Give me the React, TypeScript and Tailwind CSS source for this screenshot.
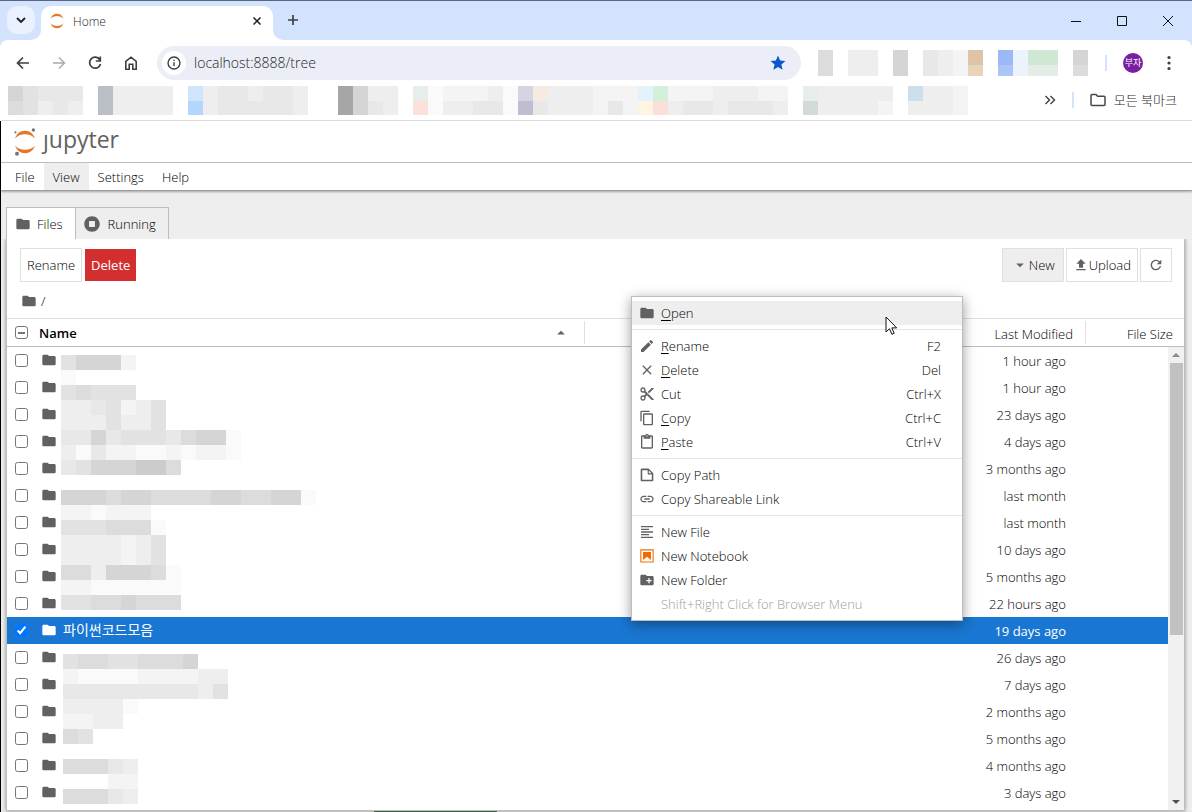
import type { ReactNode } from 'react'
import {
  MdClose,
  MdContentCopy,
  MdContentCut,
  MdContentPaste,
  MdCreateNewFolder,
  MdEdit,
  MdFileUpload,
  MdFolder,
  MdLink,
  MdRefresh,
  MdStar,
} from 'react-icons/md'

const TONES: Record<string, string> = {
  '.': 'bg-transparent',
  '1': 'bg-[#fafafa]',
  '2': 'bg-[#f4f4f4]',
  '3': 'bg-[#eeeeee]',
  '4': 'bg-[#e8e8e8]',
  '5': 'bg-[#e2e2e2]',
  '6': 'bg-[#dcdcdc]',
  '7': 'bg-[#d5d5d5]',
  '8': 'bg-[#cccccc]',
  '9': 'bg-[#a6a6a6]',
  a: 'bg-[#b9bfc4]',
  b: 'bg-[#cfe4fd]',
  c: 'bg-[#b3d6fd]',
  d: 'bg-[#fbe0db]',
  e: 'bg-[#d4d5e0]',
  f: 'bg-[#bfbdd0]',
  g: 'bg-[#f5ebe1]',
  h: 'bg-[#e3f2fc]',
  i: 'bg-[#d3f0da]',
  j: 'bg-[#fef4e2]',
  k: 'bg-[#fddfd9]',
  l: 'bg-[#cddfea]',
  m: 'bg-[#dfc3a7]',
  n: 'bg-[#e8d3bb]',
  o: 'bg-[#9cb8f7]',
  p: 'bg-[#abc5f8]',
  q: 'bg-[#edf3fc]',
  r: 'bg-[#cfe8d3]',
  s: 'bg-[#e4ece6]',
  t: 'bg-[#e6eeeb]',
  u: 'bg-[#d3dada]',
}

const EXTENSION_TILES = ['6.33.7.432m.oqrr.7', '6.33.7.432n.pqss.6']

const BOOKMARK_TILES = [
  '75444.a3333.b3443443..9733.t122231eg333222hi22233322.t33333.l332',
  '65343.a3333.c3444443..9743.d133441f4333242jk34434443.u33332.3332',
]

const UPPER_TILES = [
  '57772',
  '1',
  '56555',
  '3345235',
  '3335335',
  '447455546771',
  '314221121221',
  '45777886',
  '',
  '77767766667766771',
  '221222',
  '5556661',
  '3333235',
  '3333235',
  '66377761',
  '22111111',
  '55667666',
]

const LOWER_TILES = [
  '566556667',
  '21111222233',
  '44444444435',
  '33331',
  '2233',
  '65',
  '',
  '66643',
  '...22',
  '66643',
]

const MODIFIED = [
  '1 hour ago',
  '1 hour ago',
  '23 days ago',
  '4 days ago',
  '3 months ago',
  'last month',
  'last month',
  '10 days ago',
  '5 months ago',
  '22 hours ago',
  '19 days ago',
  '26 days ago',
  '7 days ago',
  '2 months ago',
  '5 months ago',
  '4 months ago',
  '3 days ago',
]

const SELECTED = 10

function Tiles({ rows, className = '' }: { rows: string[]; className?: string }) {
  return (
    <div className={`overflow-hidden ${className}`} aria-hidden="true">
      {rows.map((row, y) => (
        <div key={y} className="flex h-[15px]">
          {row.split('').map((tone, x) => (
            <span key={x} className={`h-[15px] w-[15px] shrink-0 ${TONES[tone]}`} />
          ))}
        </div>
      ))}
    </div>
  )
}

function Caret({ up = false }: { up?: boolean }) {
  return (
    <svg viewBox="0 0 18 18" className={`size-[18px] ${up ? 'rotate-180' : ''}`} fill="#616161">
      <path d="M5.2 7.5L9 11.2l3.8-3.8H5.2z" />
    </svg>
  )
}

function JupyterMark({ moons = false, className }: { moons?: boolean; className: string }) {
  return (
    <svg viewBox="0 0 24 28" className={className}>
      <g fill="#e67527">
        <path d="M2 10.5C3.6 5.5 7.5 2.8 12 2.8s8.4 2.7 10 7.7C19.600 7.600 16 6.200 12 6.200S4.400 7.600 2 10.500z" />
        <path d="M2 17.500c1.600 5 5.500 7.700 10 7.700s8.400-2.700 10-7.700c-2.400 2.900-6 4.300-10 4.300S4.400 20.400 2 17.500z" />
      </g>
      {moons && (
        <g fill="#767677">
          <circle cx="20.400" cy="2" r="1.700" />
          <circle cx="2.400" cy="4.300" r="1.100" />
          <circle cx="4" cy="25.800" r="2" />
        </g>
      )}
    </svg>
  )
}

function TitleBar() {
  return (
    <div className="flex h-[39px] items-end pl-[7px]">
      <button aria-label="Search tabs" className="mb-1.5 flex size-7 items-center justify-center rounded-[10px] bg-[#e9f1fe]">
        <svg viewBox="0 0 10 10" className="size-2.5" fill="none" stroke="#1f1f1f" strokeWidth="1.8">
          <path d="M1 3l4 4 4-4" />
        </svg>
      </button>
      <div className="relative ml-1.5 flex h-[34px] w-[232px] items-center rounded-t-[10px] bg-white pr-2.5 pb-1 pl-2">
        <svg viewBox="0 0 10 10" className="absolute bottom-0 -left-2.5 size-2.5" fill="#fff">
          <path d="M10 0v10H0A10 10 0 0 0 10 0z" />
        </svg>
        <svg viewBox="0 0 10 10" className="absolute -right-2.5 bottom-0 size-2.5" fill="#fff">
          <path d="M0 0v10h10A10 10 0 0 1 0 0z" />
        </svg>
        <JupyterMark className="h-[18px] w-4" />
        <span className="ml-2 flex-1 pt-0.5 text-xs text-[#1f1f1f]">Home</span>
        <button aria-label="Close tab" className="flex size-3 items-center justify-center">
          <svg viewBox="0 0 8 8" className="size-2" stroke="#1f1f1f" strokeWidth="1.5">
            <path d="M.5.5l7 7M7.500.5l-7 7" />
          </svg>
        </button>
      </div>
      <button aria-label="New tab" className="mb-3.5 ml-3.5 size-3">
        <svg viewBox="0 0 12 12" className="size-3" stroke="#3c4043" strokeWidth="1.7">
          <path d="M6 1v10M1 6h10" />
        </svg>
      </button>
      <div className="mb-3.5 ml-auto flex gap-9 pr-[19px]">
        {['M0 5.5h10', 'M.5.5h9v9h-9z', 'M0 0l10 10M10 0L0 10'].map((d, i) => (
          <button key={d} aria-label={['Minimize', 'Maximize', 'Close'][i]} className="size-2.5">
            <svg viewBox="0 0 10 10" className="size-2.5" fill="none" stroke="#111">
              <path d={d} />
            </svg>
          </button>
        ))}
      </div>
    </div>
  )
}

function AddressBar() {
  return (
    <div className="flex h-[46px] items-center pr-[15px] pl-3.5">
      <div className="flex gap-5">
        <button aria-label="Back">
          <svg viewBox="0 0 16 16" className="size-4" fill="none" stroke="#3c4043" strokeWidth="1.7">
            <path d="M14 8H3M8 2.500L2.500 8 8 13.500" />
          </svg>
        </button>
        <button aria-label="Forward">
          <svg viewBox="0 0 16 16" className="size-4" fill="none" stroke="#a9abae" strokeWidth="1.5">
            <path d="M2 8h11M8 2.500L13.500 8 8 13.500" />
          </svg>
        </button>
        <button aria-label="Reload">
          <svg viewBox="0 0 16 16" className="size-4" fill="none" stroke="#3c4043" strokeWidth="1.7">
            <path d="M12.800 4.700A5.500 5.500 0 1 0 13.500 9M13.300 1.500V6H8.800" />
          </svg>
        </button>
        <button aria-label="Home page">
          <svg viewBox="0 0 16 16" className="size-4" fill="none" stroke="#3c4043" strokeWidth="1.6">
            <path d="M2.800 6.300L8 2.200l5.200 4.100v7.900H9.800V9.300H6.200v4.900H2.800z" />
          </svg>
        </button>
      </div>
      <div className="mr-[17px] ml-[18px] flex h-[34px] flex-1 items-center rounded-full bg-[#ebeef6] pr-3.5 pl-[5px]">
        <span className="flex size-6 items-center justify-center rounded-full bg-white">
          <svg viewBox="0 0 16 16" className="size-3.5" fill="none" stroke="#3c4043" strokeWidth="1.6">
            <circle cx="8" cy="8" r="6.8" />
            <path d="M8 7.200v4.300M8 4.300v1.500" />
          </svg>
        </span>
        <input
          aria-label="Address"
          defaultValue="localhost:8888/tree"
          className="ml-2 min-w-0 flex-1 bg-transparent text-sm text-[#1f1f1f] outline-none"
        />
        <button aria-label="Edit bookmark">
          <MdStar className="size-[18px] text-[#0b57d0]" />
        </button>
      </div>
      <Tiles rows={EXTENSION_TILES} className="h-[26px]" />
      <span className="ml-[17px] h-4 w-0.5 bg-[#d3e3fd]" />
      <button className="ml-4 flex size-5 items-center justify-center rounded-full bg-[#7b1fa2] text-[9px] font-normal text-white">
        부자
      </button>
      <button aria-label="Menu" className="ml-[18px]">
        <svg viewBox="0 0 16 16" className="size-4" fill="#3c4043">
          <circle cx="8" cy="2.5" r="1.6" />
          <circle cx="8" cy="8" r="1.6" />
          <circle cx="8" cy="13.5" r="1.6" />
        </svg>
      </button>
    </div>
  )
}

function BookmarkBar() {
  return (
    <div className="flex h-[35px] items-center justify-between border-b border-[#e0e0e0] pr-[15px] pb-1.5 pl-[7px]">
      <Tiles rows={BOOKMARK_TILES} className="h-[29px] min-w-0" />
      <div className="flex shrink-0 items-center">
        <button aria-label="More bookmarks">
          <svg viewBox="0 0 12 12" className="size-3" fill="none" stroke="#3c4043" strokeWidth="1.4">
            <path d="M1.500 2l4 4-4 4M6.500 2l4 4-4 4" />
          </svg>
        </button>
        <span className="ml-4 h-4 w-0.5 bg-[#d3e3fd]" />
        <button className="ml-4 flex items-center gap-2 text-[13px] text-[#1f1f1f]">
          <svg viewBox="0 0 16 14" className="h-3.5 w-4" fill="none" stroke="#474747" strokeWidth="1.5">
            <path d="M1 2.500q0-1 1-1h4l1.600 1.700H14q1 0 1 1v7.300q0 1-1 1H2q-1 0-1-1z" />
          </svg>
          모든 북마크
        </button>
      </div>
    </div>
  )
}

function Header() {
  return (
    <header className="relative bg-white shadow-[0_1px_2px_rgba(0,0,0,0.3)]">
      <div className="flex h-[42px] items-center border-b border-[#bdbdbd] pl-3">
        <JupyterMark moons className="h-7 w-6" />
        <span aria-label="jupyter" className="ml-1.5 pb-1.5 text-[23px] leading-7 font-normal text-[#616161]">
          ȷupyter
        </span>
      </div>
      <nav className="flex h-7 border-b border-[#9e9e9e] pl-[5px]">
        {['File', 'View', 'Settings', 'Help'].map((name) => (
          <button key={name} className={`px-[9px] ${name === 'View' ? 'bg-[#eeeeee]' : ''}`}>
            {name}
          </button>
        ))}
      </nav>
    </header>
  )
}

function Toolbar() {
  return (
    <div className="flex h-[43px] items-end justify-between pr-3 pl-[13px]">
      <div className="flex items-center gap-[3px]">
        <button className="h-[34px] border border-[#e0e0e0] px-1.5">Rename</button>
        <button className="h-8 bg-[#d32f2f] px-1.5 font-normal text-white">Delete</button>
      </div>
      <div className="flex gap-0.5">
        <button className="flex h-[34px] items-center border border-[#e0e0e0] bg-[#eeeeee] px-2">
          <Caret />
          New
        </button>
        <button className="flex h-[34px] items-center border border-[#e0e0e0] px-1.5">
          <MdFileUpload className="size-4 text-[#616161]" />
          Upload
        </button>
        <button aria-label="Refresh" className="flex h-[34px] items-center border border-[#e0e0e0] px-[7px]">
          <MdRefresh className="size-4 text-[#616161]" />
        </button>
      </div>
    </div>
  )
}

function FileTable() {
  return (
    <div className="relative min-h-0 flex-1 overflow-hidden">
      <table className="w-full table-fixed border-collapse">
        <thead>
          <tr className="h-7 border-t border-b border-t-[#e0e0e0] border-b-[#bdbdbd]">
            <th className="w-[29px] p-0">
              <span className="relative ml-2 flex size-[13px] items-center justify-center">
                <input
                  type="checkbox"
                  aria-label="Select all"
                  className="size-[13px] appearance-none rounded-[3px] border border-[#767676]"
                />
                <span className="absolute h-0.5 w-[7px] bg-[#767676]" />
              </span>
            </th>
            <th className="w-[549px] p-0 pl-[3px]">
              <div className="flex h-[23px] items-center justify-between border-r border-[#e0e0e0] pr-3.5">
                <span className="font-semibold">Name</span>
                <Caret up />
              </div>
            </th>
            <th className="p-0 text-right font-light">
              <div className="flex h-[23px] items-center justify-end border-r border-[#e0e0e0] pt-0.5 pr-3">
                Last Modified
              </div>
            </th>
            <th className="w-[98px] p-0 pt-0.5 pr-[11px] text-right font-light">File Size</th>
          </tr>
        </thead>
        <tbody>
          {MODIFIED.map((when, i) => {
            const selected = i === SELECTED
            return (
              <tr key={i} className={`h-[27px] ${selected ? 'bg-[#1976d2] font-normal text-white' : ''}`}>
                <td className="p-0">
                  <input
                    type="checkbox"
                    aria-label={`Select item ${i + 1}`}
                    defaultChecked={selected}
                    className="ml-2 block size-[13px]"
                  />
                </td>
                <td className="p-0 pl-[5px]">
                  <div className="flex items-center gap-1.5 text-sm leading-5">
                    <MdFolder className={`size-4 ${selected ? 'text-white' : 'text-[#616161]'}`} />
                    {selected && '파이썬코드모음'}
                  </div>
                </td>
                <td className="p-0 pt-0.5 pr-5 text-right">{when}</td>
                <td className="p-0" />
              </tr>
            )
          })}
        </tbody>
      </table>
      <Tiles rows={UPPER_TILES} className="absolute top-[37px] left-[54px]" />
      <Tiles rows={LOWER_TILES} className="absolute top-[336px] left-14" />
      <div className="absolute top-[29px] right-0 bottom-0 flex w-4 flex-col items-center bg-[#f1f1f1] py-1.5">
        <svg viewBox="0 0 8 4" className="h-1 w-2" fill="#8b8b8b">
          <path d="M0 4l4-4 4 4z" />
        </svg>
        <span className="mt-1.5 h-[272px] w-[13px] bg-[#c1c1c1]" />
        <svg viewBox="0 0 8 4" className="mt-auto h-1 w-2" fill="#505050">
          <path d="M0 0l4 4 4-4z" />
        </svg>
      </div>
    </div>
  )
}

type MenuItemProps = {
  icon?: ReactNode
  label: string
  mnemonic?: boolean
  keys?: string
  active?: boolean
  disabled?: boolean
}

function MenuItem({ icon, label, mnemonic, keys, active, disabled }: MenuItemProps) {
  return (
    <button
      role="menuitem"
      disabled={disabled}
      className={`flex h-6 w-full items-center pr-[21px] pl-[7px] ${active ? 'bg-[#eeeeee]' : ''} ${disabled ? 'text-[#a0a0a0]' : ''}`}
    >
      <span className="mr-1.5 flex size-4 text-[#616161]">{icon}</span>
      <span className="flex-1 text-left">
        {mnemonic ? (
          <>
            <span className="underline underline-offset-2">{label[0]}</span>
            {label.slice(1)}
          </>
        ) : (
          label
        )}
      </span>
      {keys && <span>{keys}</span>}
    </button>
  )
}

function Divider() {
  return <div className="my-1 h-px bg-[#e4e4e4]" />
}

function ContextMenu() {
  return (
    <div
      role="menu"
      className="absolute top-[57px] right-[221px] w-[332px] border border-[#bdbdbd] bg-white py-1 shadow-[0_3px_12px_rgba(0,0,0,0.4)]"
    >
      <MenuItem active mnemonic label="Open" icon={<MdFolder className="size-4" />} />
      <Divider />
      <MenuItem mnemonic label="Rename" keys="F2" icon={<MdEdit className="size-4" />} />
      <MenuItem mnemonic label="Delete" keys="Del" icon={<MdClose className="size-4" />} />
      <MenuItem label="Cut" keys="Ctrl+X" icon={<MdContentCut className="size-4" />} />
      <MenuItem mnemonic label="Copy" keys="Ctrl+C" icon={<MdContentCopy className="size-4" />} />
      <MenuItem mnemonic label="Paste" keys="Ctrl+V" icon={<MdContentPaste className="size-4" />} />
      <Divider />
      <MenuItem
        label="Copy Path"
        icon={
          <svg viewBox="0 0 22 22" className="size-4" fill="#616161">
            <path d="M19.3 8.2l-5.5-5.5c-.3-.3-.7-.5-1.2-.5H3.9c-.8.1-1.6.9-1.6 1.8v14.1c0 .9.7 1.6 1.6 1.6h14.2c.9 0 1.6-.7 1.6-1.6V9.4c.1-.5-.1-.9-.4-1.2zm-5.8-3.3l3.4 3.6h-3.4V4.9zm3.9 12.7H4.7c-.1 0-.2 0-.2-.2V4.7c0-.2.1-.3.2-.3h7.2v4.4s0 .8.3 1.1c.3.3 1.1.3 1.1.3h4.3v7.2s-.1.2-.2.2z" />
          </svg>
        }
      />
      <MenuItem label="Copy Shareable Link" icon={<MdLink className="size-4" />} />
      <Divider />
      <MenuItem
        label="New File"
        icon={
          <svg viewBox="0 0 24 24" className="size-4" fill="#616161">
            <path d="M15 15H3v2h12v-2zm0-8H3v2h12V7zM3 13h18v-2H3v2zm0 8h18v-2H3v2zM3 3v2h18V3H3z" />
          </svg>
        }
      />
      <MenuItem
        label="New Notebook"
        icon={
          <svg viewBox="0 0 22 22" className="size-4" fill="#ef6c00">
            <path d="M18.7 3.3v15.4H3.3V3.3h15.4m1.500-1.500H1.800v18.300h18.300l.1-18.300z" />
            <path d="M16.500 16.500l-5.400-4.300-5.600 4.300v-11h11z" />
          </svg>
        }
      />
      <MenuItem label="New Folder" icon={<MdCreateNewFolder className="size-4" />} />
      <MenuItem disabled label="Shift+Right Click for Browser Menu" />
      <svg viewBox="0 0 13 20" className="absolute top-[19px] right-16 h-5 w-[13px]" fill="#fff" stroke="#111">
        <path d="M1 1v15l3.500-3.300 2.400 5.600 2.300-1-2.400-5.400h4.900z" />
      </svg>
    </div>
  )
}

export default function App() {
  return (
    <div className="flex h-screen flex-col overflow-hidden border-t border-[#5a6783] bg-[#d3e3fd] font-['Open_Sans','Noto_Sans_CJK_KR',sans-serif] text-[13px] leading-5 font-light text-black">
      <TitleBar />
      <div className="rounded-t-lg bg-white pl-px">
        <AddressBar />
        <BookmarkBar />
      </div>
      <div className="flex min-h-0 flex-1 flex-col border-l border-black bg-[#eeeeee]">
        <Header />
        <main className="flex min-h-0 flex-1 flex-col pt-4 pr-[7px] pl-[5px]">
          <div role="tablist" className="flex">
            <button
              role="tab"
              aria-selected="true"
              className="flex h-8 items-center gap-1.5 border-t border-l border-[#bdbdbd] bg-white px-2 pr-3"
            >
              <MdFolder className="size-4 text-[#616161]" />
              Files
            </button>
            <button
              role="tab"
              aria-selected="false"
              className="flex h-8 items-center gap-2 border border-b-0 border-[#bdbdbd] px-2 pr-3"
            >
              <svg viewBox="0 0 512 512" className="size-4" fill="#616161">
                <path d="M256 8C119 8 8 119 8 256s111 248 248 248 248-111 248-248S393 8 256 8zm96 328c0 8.8-7.2 16-16 16H176c-8.800 0-16-7.200-16-16V176c0-8.800 7.200-16 16-16h160c8.800 0 16 7.200 16 16v160z" />
              </svg>
              Running
            </button>
          </div>
          <div className="relative flex min-h-0 flex-1 flex-col border-r border-b border-l border-[#bdbdbd] bg-white shadow-[0_0_4px_rgba(0,0,0,0.4)] [clip-path:inset(0_-6px_-6px_-6px)]">
            <Toolbar />
            <div className="flex h-9 items-center gap-1 pt-0.5 pl-3.5">
              <MdFolder className="size-4 text-[#616161]" />
              <span>/</span>
            </div>
            <FileTable />
            <ContextMenu />
          </div>
        </main>
        <div className="flex h-px bg-[#e8e8e8]">
          <span className="ml-[373px] w-[123px] bg-[#3f7d5a]" />
        </div>
      </div>
    </div>
  )
}
